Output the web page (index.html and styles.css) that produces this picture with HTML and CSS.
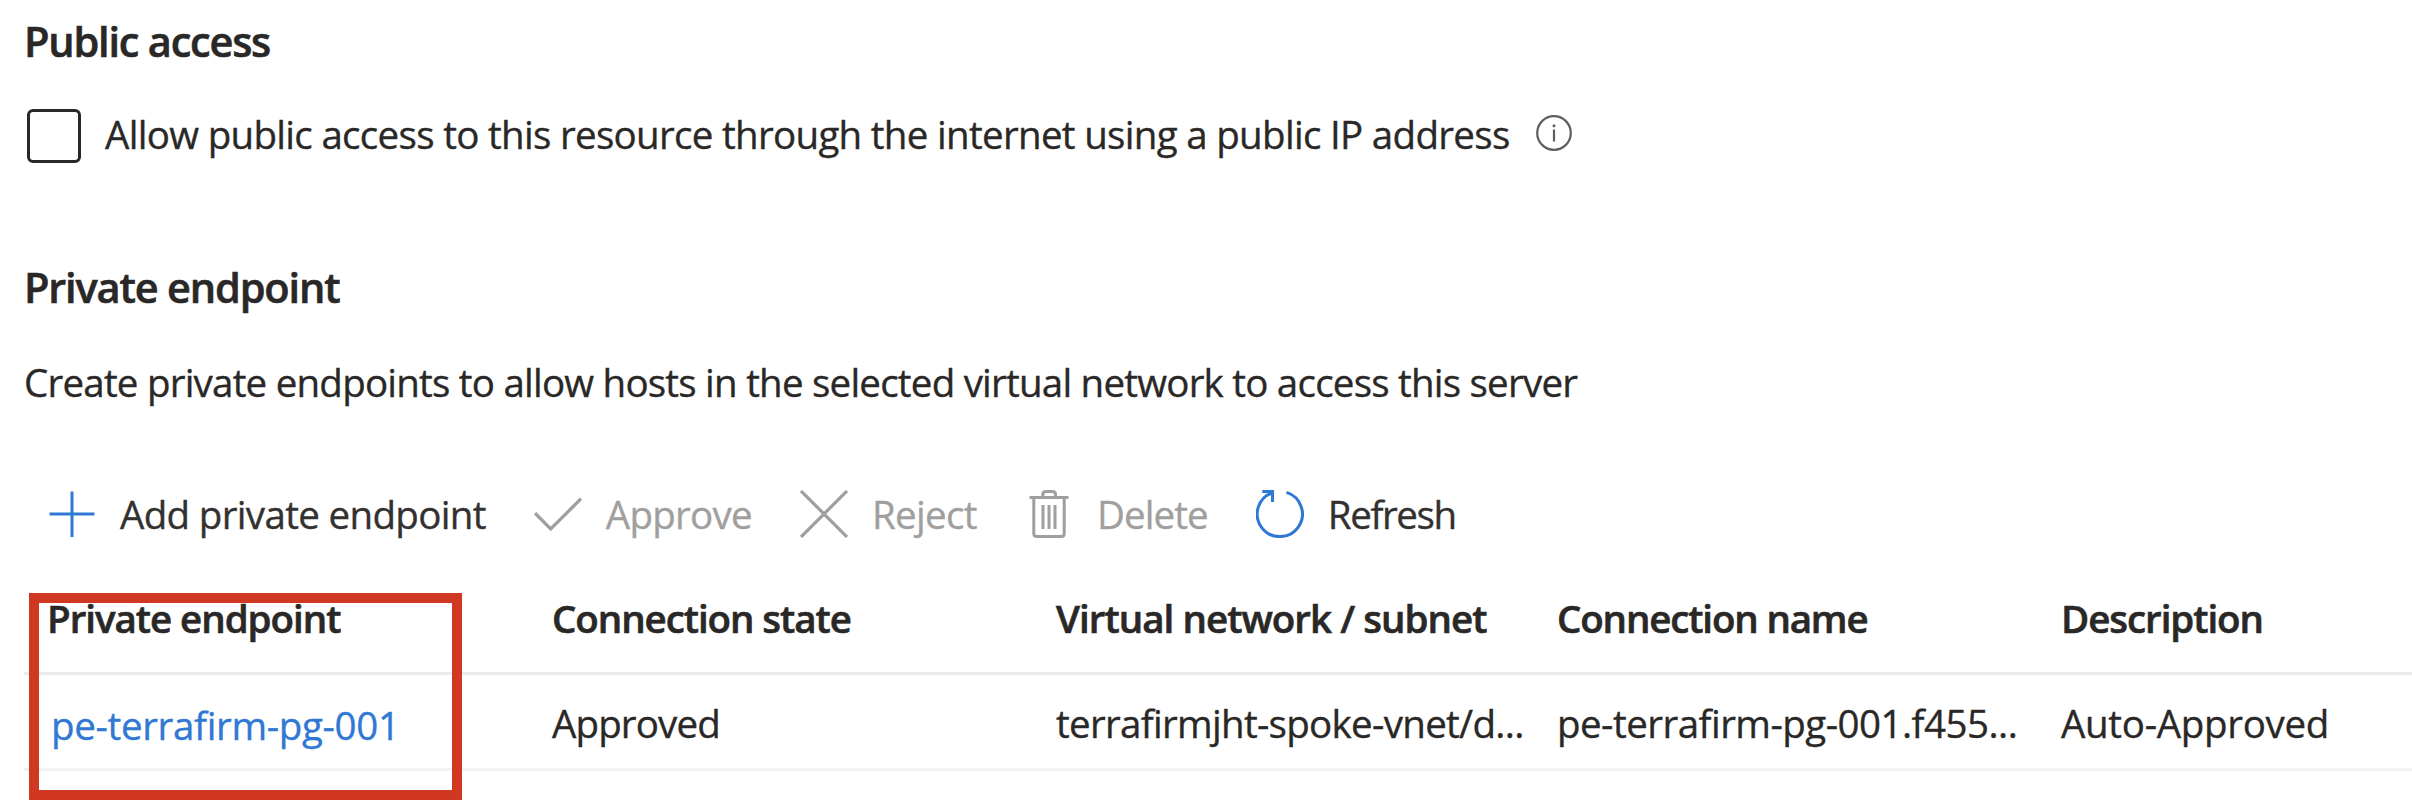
FILE: index.html
```
<!DOCTYPE html>
<html lang="en">
<head>
<meta charset="utf-8">
<title>Networking</title>
<link rel="stylesheet" href="styles.css">
</head>
<body>
<main class="page">
  <h2 class="heading heading-public">Public access</h2>
  <div class="option">
    <span class="checkbox" role="checkbox" aria-checked="false"></span>
    <span class="option-label">Allow public access to this resource through the internet using a public IP address</span>
    <svg class="info" viewBox="0 0 36 36" fill="none" stroke="#605e5c">
      <circle cx="18" cy="18" r="16.8" stroke-width="2.2"/>
      <path d="M18 14.5V26.5" stroke-width="2.2"/>
      <circle cx="18" cy="10.7" r="1.5" fill="#605e5c" stroke="none"/>
    </svg>
  </div>

  <h2 class="heading heading-private">Private endpoint</h2>
  <p class="description">Create private endpoints to allow hosts in the selected virtual network to access this server</p>

  <div class="toolbar">
    <div class="command">
      <svg class="icon blue" viewBox="0 0 48 48"><path d="M24 1.5V47M1.5 24H46.5" stroke-width="3"/></svg>
      <span class="t-add">Add private endpoint</span>
    </div>
    <div class="command disabled">
      <svg class="icon" viewBox="0 0 48 48"><path d="M1 23.2L16.7 39L47 8.7" stroke-width="3.3"/></svg>
      <span class="t-approve">Approve</span>
    </div>
    <div class="command disabled">
      <svg class="icon" viewBox="0 0 48 48"><path d="M1 1L47 47M47 1L1 47" stroke-width="3.2"/></svg>
      <span class="t-reject">Reject</span>
    </div>
    <div class="command disabled">
      <svg class="icon" viewBox="0 0 48 48"><path d="M4.5 7.5H43.5M17.8 7.5V4.5Q17.8 1.5 20.8 1.5H27.5Q30.5 1.5 30.5 4.5V7.5M8.8 7.5V43.5Q8.8 46.5 11.8 46.5H36.2Q39.2 46.5 39.2 43.5V7.5M18 15V39M24 15V39M30 15V39" stroke-width="3"/></svg>
      <span class="t-delete">Delete</span>
    </div>
    <div class="command">
      <svg class="icon blue" viewBox="0 0 48 48"><path d="M30.5 2.4A22.6 22.6 0 1 1 16.5 2.6M6.3 1.5H16.5V12" stroke-width="3"/></svg>
      <span class="t-refresh">Refresh</span>
    </div>
  </div>

  <div class="table">
    <div class="row head">
      <span class="h-endpoint">Private endpoint</span>
      <span class="h-state">Connection state</span>
      <span class="h-network">Virtual network / subnet</span>
      <span class="h-name">Connection name</span>
      <span class="h-description">Description</span>
    </div>
    <div class="row">
      <a class="link">pe-terrafirm-pg-001</a>
      <span class="c-state">Approved</span>
      <span class="c-network">terrafirmjht-spoke-vnet/d...</span>
      <span class="c-name">pe-terrafirm-pg-001.f455...</span>
      <span class="c-description">Auto-Approved</span>
    </div>
  </div>
  <div class="highlight"></div>
</main>
</body>
</html>
```
FILE: styles.css
```
* { box-sizing: border-box; }
body { margin: 0; background: #fff; }
.page {
  position: relative;
  width: 2412px;
  height: 804px;
  padding: 13px 0 0 24px;
  overflow: hidden;
  color: #292827;
  font: 400 38.5px/52px "Open Sans", "Noto Sans", sans-serif;
  -webkit-text-stroke: 0.35px currentColor;
  white-space: nowrap;
}
.heading { margin: 0; font-size: 41.5px; line-height: 56px; font-weight: 600; }
.heading, .head { -webkit-text-stroke-width: 0.6px; }
.heading-public { letter-spacing: -1.21px; }
.heading-private { margin-top: 96px; letter-spacing: -1.16px; }

.option { display: flex; align-items: flex-start; height: 54px; margin-top: 40px; padding-left: 3px; }
.checkbox { width: 54px; height: 54px; border: 3px solid #292827; border-radius: 6px; }
.option-label { margin-left: 24px; line-height: 50px; letter-spacing: -0.69px; }
.info { width: 36px; height: 36px; margin: 6px 0 0 26px; }

.description { margin: 41px 0 0; letter-spacing: -0.775px; }

.toolbar { display: flex; gap: 48px; margin-top: 80px; padding-left: 24px; color: #323130; }
.command { display: flex; align-items: center; gap: 24px; }
.icon { width: 48px; height: 48px; fill: none; stroke: #a19f9d; }
.blue { stroke: #2f78d3; }
.disabled { color: #a19f9d; }
.t-add { letter-spacing: -0.66px; }
.t-approve { letter-spacing: -0.73px; }
.t-reject { letter-spacing: -0.65px; }
.t-delete { letter-spacing: -0.88px; }
.t-refresh { letter-spacing: -1.4px; }

.table { margin-top: 52px; }
.row {
  display: grid;
  grid-template-columns: 505px 504px 501px 504px 1fr;
  align-items: start;
  padding: 22px 0 15px 23px;
  border-bottom: 3px solid #f3f2f1;
}
.head { padding: 0 0 28px 23px; border-color: #edebe9; font-weight: 600; }
.h-endpoint { letter-spacing: -1.03px; }
.h-state { letter-spacing: -1.06px; }
.h-network { letter-spacing: -0.96px; }
.h-name { letter-spacing: -1.15px; }
.h-description { letter-spacing: -1.05px; }
.link { padding-left: 4px; line-height: 56px; letter-spacing: -0.34px; color: #2f78d3; }
.c-state { letter-spacing: -0.86px; }
.c-network { letter-spacing: -0.7px; }
.c-name { letter-spacing: -0.53px; }
.c-description { letter-spacing: -0.3px; }

.highlight {
  position: absolute;
  left: 29px;
  top: 593px;
  width: 433px;
  height: 207px;
  border: 10px solid #d13821;
}
```
